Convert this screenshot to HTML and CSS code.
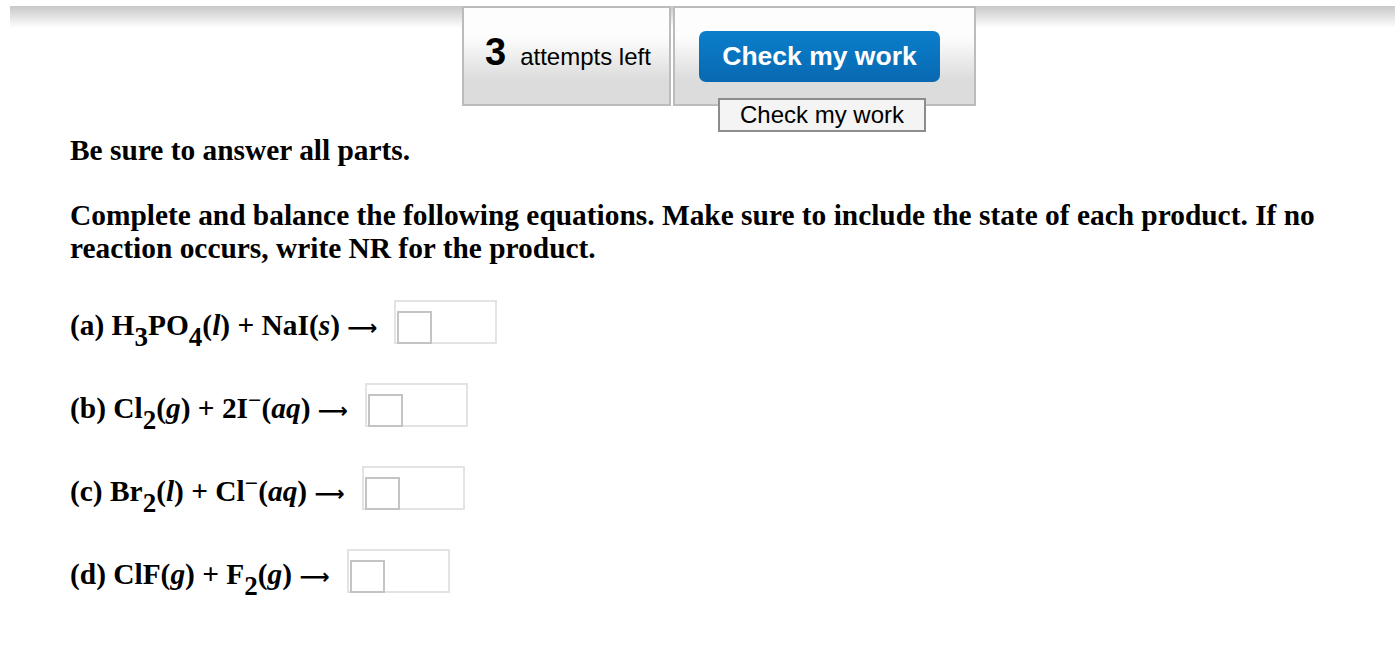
FILE: index.html
```html
<!DOCTYPE html>
<html lang="en">
<head>
<meta charset="utf-8">
<title>Check my work</title>
<link rel="stylesheet" href="styles.css">
</head>
<body>
<header class="topbar">
  <div class="attempts-box">
    <span class="attempts-num">3</span>
    <span class="attempts-label">attempts left</span>
  </div>
  <div class="check-box">
    <button class="check-btn" type="button">Check my work</button>
    <div class="tooltip">Check my work</div>
  </div>
</header>
<main class="content">
  <p class="lead">Be sure to answer all parts.</p>
  <p class="instr">Complete and balance the following equations. Make sure to include the state of each product. If no reaction occurs, write NR for the product.</p>
  <div class="eq">(a) H<sub>3</sub>PO<sub>4</sub>(<i>l</i>) + NaI(<i>s</i>) <span class="arrow">⟶</span><span class="answer"><span class="caret-box"></span></span></div>
  <div class="eq">(b) Cl<sub>2</sub>(<i>g</i>) + 2I<sup>−</sup>(<i>aq</i>) <span class="arrow">⟶</span><span class="answer"><span class="caret-box"></span></span></div>
  <div class="eq">(c) Br<sub>2</sub>(<i>l</i>) + Cl<sup>−</sup>(<i>aq</i>) <span class="arrow">⟶</span><span class="answer"><span class="caret-box"></span></span></div>
  <div class="eq">(d) ClF(<i>g</i>) + F<sub>2</sub>(<i>g</i>) <span class="arrow">⟶</span><span class="answer"><span class="caret-box"></span></span></div>
</main>
</body>
</html>
```

FILE: styles.css
```css
html, body {
  margin: 0;
  padding: 0;
  background: #fff;
}

body {
  font-family: "Liberation Serif", "Times New Roman", serif;
  color: #000;
  min-height: 100vh;
  box-sizing: border-box;
  padding-bottom: 60px;
}

.topbar {
  margin: 6px 0 0 10px;
  padding-left: 452px;
  display: flex;
  gap: 2px;
  background: linear-gradient(#c8c8c8, #ffffff) no-repeat 0 0 / 100% 22px;
}

.attempts-box {
  box-sizing: border-box;
  width: 209px;
  height: 100px;
  border: 2px solid #bcbcbc;
  background: linear-gradient(#fdfdfd 30%, #dcdcdc 75%);
  display: flex;
  align-items: baseline;
  padding: 25px 0 0 21px;
  font-family: "Liberation Sans", Arial, sans-serif;
}

.attempts-num {
  font-size: 38px;
  font-weight: bold;
  line-height: 1;
}

.attempts-label {
  font-size: 24px;
  margin-left: 14px;
}

.check-box {
  position: relative;
  box-sizing: border-box;
  width: 303px;
  height: 100px;
  border: 2px solid #bcbcbc;
  background: linear-gradient(#fdfdfd 30%, #dcdcdc 75%);
  padding: 23px 0 0 24px;
}

.check-btn {
  display: block;
  width: 241px;
  height: 51px;
  border: none;
  border-radius: 7px;
  background: linear-gradient(#0b7ecb, #0869b1);
  color: #fff;
  font-family: "Liberation Sans", Arial, sans-serif;
  font-weight: bold;
  font-size: 26.5px;
  padding: 0;
}

.tooltip {
  position: absolute;
  left: 43px;
  top: 90px;
  box-sizing: border-box;
  width: 208px;
  height: 34px;
  border: 2px solid #8c8c8c;
  background: #f4f4f4;
  font-family: "Liberation Sans", Arial, sans-serif;
  font-size: 24px;
  line-height: 30px;
  text-align: center;
}

.content {
  padding-left: 70px;
  padding-right: 40px;
}

.lead {
  font-weight: bold;
  font-size: 29.4px;
  margin: 28px 0 0;
  line-height: 33px;
}

.instr {
  font-weight: bold;
  font-size: 29.4px;
  line-height: 32.5px;
  margin: 32px 0 0;
}

.eq {
  font-weight: bold;
  font-size: 29.4px;
  line-height: 33px;
  margin-top: 36px;
}

.eq + .eq {
  margin-top: 39px;
}

.eq sub {
  font-size: 0.92em;
  line-height: 0;
  vertical-align: -0.42em;
}

.eq sup {
  font-size: 0.8em;
  line-height: 0;
  vertical-align: 0.42em;
}

.arrow {
  font-family: "DejaVu Sans", sans-serif;
  font-weight: bold;
  font-size: 21px;
  line-height: 0;
}

.answer {
  display: inline-block;
  box-sizing: border-box;
  width: 103px;
  height: 44px;
  margin-left: 17px;
  vertical-align: -9px;
  border: 2px solid #e3e3e3;
  padding: 9px 0 0 1px;
}

.caret-box {
  display: block;
  box-sizing: border-box;
  width: 35px;
  height: 33px;
  border: 2px solid #c4c4c4;
}
```
